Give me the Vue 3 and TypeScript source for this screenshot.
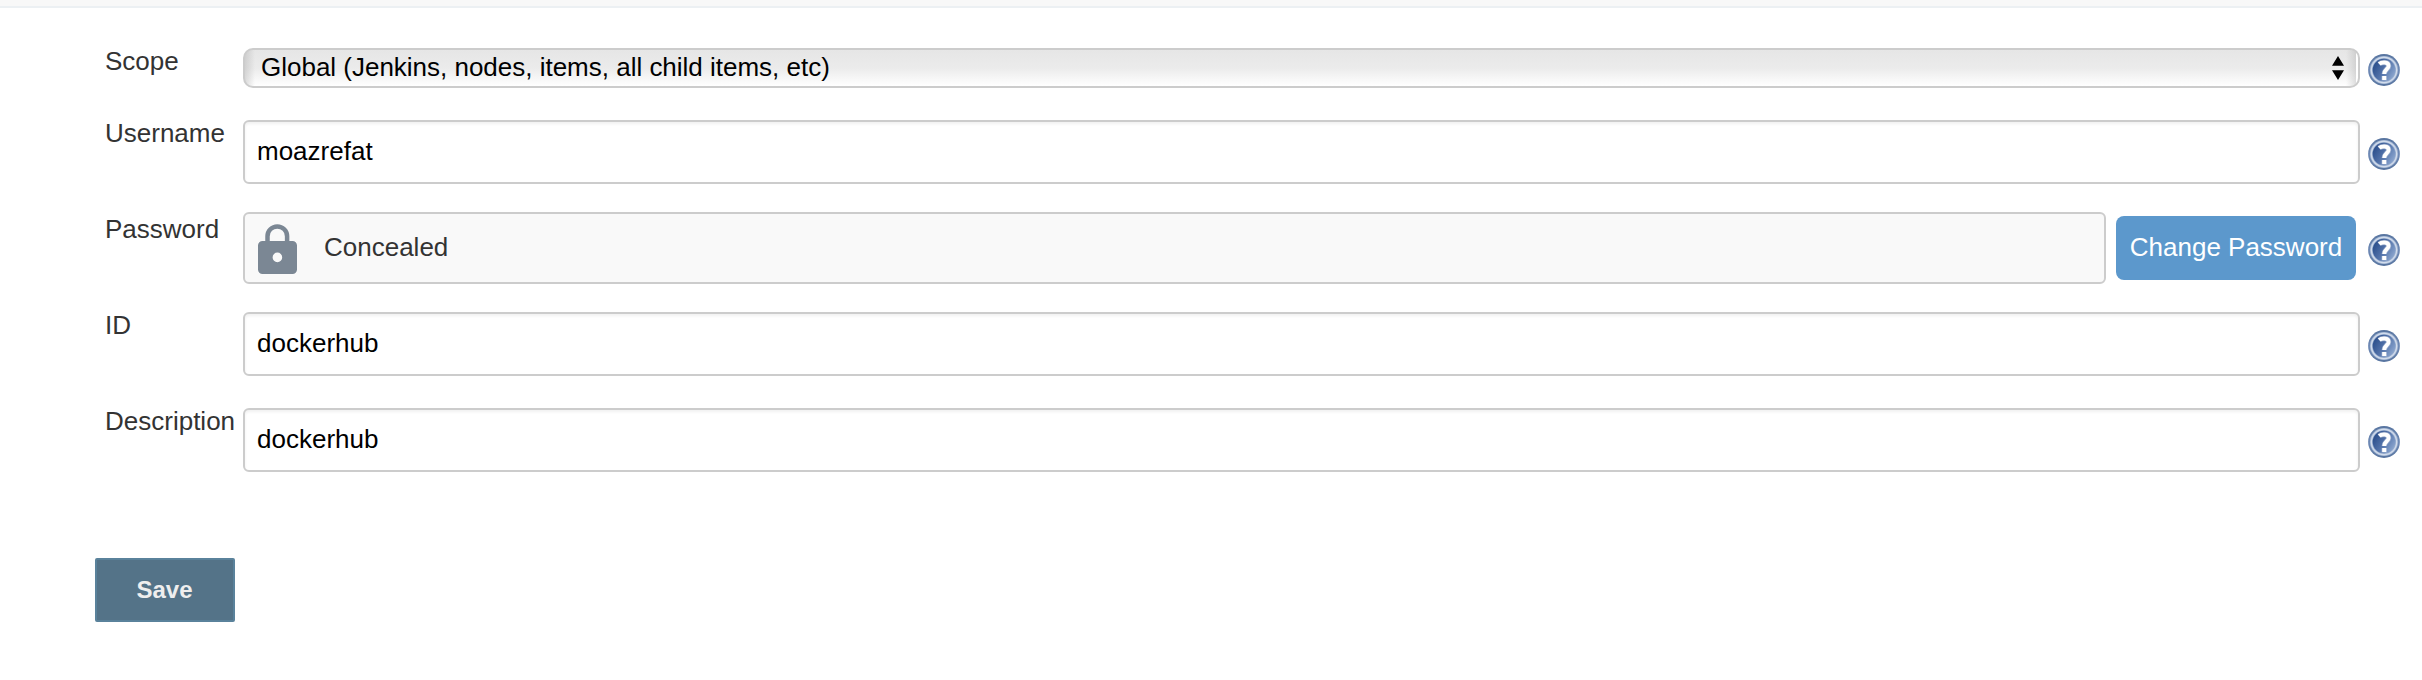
<script setup lang="ts">
interface Field {
  kind: 'select' | 'text' | 'secret'
  label: string
  value: string
}

const fields: Field[] = [
  { kind: 'select', label: 'Scope', value: 'Global (Jenkins, nodes, items, all child items, etc)' },
  { kind: 'text', label: 'Username', value: 'moazrefat' },
  { kind: 'secret', label: 'Password', value: 'Concealed' },
  { kind: 'text', label: 'ID', value: 'dockerhub' },
  { kind: 'text', label: 'Description', value: 'dockerhub' },
]
</script>

<template>
  <main class="page">
    <div class="topbar"></div>
    <form class="form" @submit.prevent>
      <div v-for="f in fields" :key="f.label" class="row" :class="f.kind">
        <label class="label">{{ f.label }}</label>

        <div v-if="f.kind === 'select'" class="select-box">
          <span class="select-value">{{ f.value }}</span>
          <svg class="arrows" width="12" height="24" viewBox="0 0 12 24">
            <path d="M6 0L12 9.8H0ZM0 14.2H12L6 24Z" fill="#000" />
          </svg>
        </div>

        <div v-else-if="f.kind === 'text'" class="text-box">{{ f.value }}</div>

        <div v-else class="secret-group">
          <div class="secret-box">
            <svg class="lock" width="39" height="50" viewBox="0 0 39 50" fill="none">
              <path d="M9.5 18V12.2a9.8 9.8 0 0 1 19.6 0V18" stroke="#7b8794" stroke-width="4.5" />
              <path
                fill-rule="evenodd"
                d="M4.5 17H34.5a4.5 4.5 0 0 1 4.5 4.5V45.5a4.5 4.5 0 0 1-4.5 4.5H4.5A4.5 4.5 0 0 1 0 45.5V21.5A4.5 4.5 0 0 1 4.5 17ZM19.4 28.6a4.8 4.8 0 1 0 0 9.6a4.8 4.8 0 1 0 0-9.6Z"
                fill="#7b8794"
              />
            </svg>
            <span>{{ f.value }}</span>
          </div>
          <button type="button" class="change">Change Password</button>
        </div>

        <svg class="help" width="32" height="32" viewBox="0 0 32 32">
          <defs>
            <linearGradient :id="'disc-' + f.label" x1="0" y1="0.2" x2="1" y2="0.8">
              <stop offset="0" stop-color="#264a88" />
              <stop offset="0.5" stop-color="#5373aa" />
              <stop offset="1" stop-color="#91abd2" />
            </linearGradient>
            <linearGradient :id="'rim-' + f.label" x1="0" y1="0" x2="0" y2="1">
              <stop offset="0" stop-color="#57749f" />
              <stop offset="0.5" stop-color="#6f8ab6" />
              <stop offset="1" stop-color="#57749f" />
            </linearGradient>
          </defs>
          <circle cx="16" cy="16" r="15.9" :fill="`url(#rim-${f.label})`" />
          <circle cx="16" cy="16" r="14" fill="#a9bbd7" />
          <circle cx="16" cy="16" r="13.2" fill="#d3ddec" />
          <circle cx="16" cy="16" r="12" fill="#9bb0d1" />
          <circle cx="16" cy="16" r="11.3" :fill="`url(#disc-${f.label})`" />
          <g fill="none" stroke="#fff">
            <path
              d="M11.2 10C13.4 7.9 20.6 7.4 20.6 11.9C20.6 15.3 16.2 15.4 16.2 20M16.2 22V26.4"
              stroke-width="5.4"
              stroke-opacity="0.3"
            />
            <path d="M11.2 10C13.4 7.9 20.6 7.4 20.6 11.9C20.6 15.3 16.2 15.4 16.2 20" stroke-width="3.9" />
            <path d="M16.2 22V26" stroke-width="4" />
          </g>
        </svg>
      </div>
      <button type="submit" class="save">Save</button>
    </form>
  </main>
</template>

<style>
body {
  margin: 0;
  background: #fff;
}
</style>

<style scoped>
.page {
  box-sizing: border-box;
  width: 100%;
  height: 680px;
  background: #fff;
  color: #333;
  font-family: 'Liberation Sans', Arial, sans-serif;
  font-size: 26px;
  line-height: 30px;
  overflow: hidden;
}
.topbar {
  box-sizing: border-box;
  height: 8px;
  background: #f8f8f8;
  border-bottom: 2px solid #ecf0f3;
}
.form {
  padding: 38px 22px 0 95px;
}
.row {
  display: grid;
  grid-template-columns: 138px minmax(0, 1fr) 40px;
  align-items: start;
  height: 96px;
  padding-left: 10px;
}
.row.select {
  height: 72px;
}
.label {
  white-space: nowrap;
}
.select-box {
  box-sizing: border-box;
  display: flex;
  align-items: center;
  justify-content: space-between;
  height: 40px;
  margin-top: 2px;
  padding: 0 14px 2px 16px;
  border: 2px solid #ccc;
  border-radius: 10px;
  color: #000;
  background:
    linear-gradient(to right, #fff, #fff) right / 2px 100% no-repeat,
    linear-gradient(to right, rgba(170, 170, 170, 0.4), rgba(200, 200, 200, 0) 10px),
    linear-gradient(to left, rgba(170, 170, 170, 0.45), rgba(200, 200, 200, 0) 12px),
    linear-gradient(#e6e6e6, #ebebeb 50%, #fff);
}
.select-value {
  letter-spacing: -0.01px;
}
.arrows {
  margin-top: 2px;
}
.text-box {
  box-sizing: border-box;
  height: 64px;
  margin-top: 2px;
  padding: 14px 12px;
  border: 2px solid #ccc;
  border-radius: 6px;
  background: #fff;
  box-shadow: inset 0 2px 3px rgba(0, 0, 0, 0.06);
  color: #000;
}
.secret-group {
  display: flex;
  align-items: center;
  gap: 10px;
  height: 72px;
  margin-top: -2px;
  padding-right: 4px;
}
.secret-box {
  box-sizing: border-box;
  display: flex;
  flex: 1;
  align-items: center;
  height: 72px;
  padding-left: 13px;
  border: 2px solid #ccc;
  border-radius: 6px;
  background: #f9f9f9;
}
.lock {
  margin: 2px 27px 0 0;
}
.secret-box span {
  padding-bottom: 2px;
}
.change {
  box-sizing: border-box;
  width: 240px;
  height: 64px;
  padding: 0 0 2px;
  border: 0;
  border-radius: 8px;
  background: #5c98cc;
  color: #fff;
  font: inherit;
  white-space: nowrap;
}
.help {
  justify-self: end;
  margin-top: 20px;
}
.select .help {
  margin-top: 8px;
}
.save {
  display: block;
  box-sizing: border-box;
  width: 140px;
  height: 64px;
  margin-top: 56px;
  padding: 0 1px 1px 0;
  border: 2px solid #5a829b;
  border-radius: 2px;
  background: #547388;
  color: #eee;
  font: bold 24px/30px 'Liberation Sans', Arial, sans-serif;
}
</style>
